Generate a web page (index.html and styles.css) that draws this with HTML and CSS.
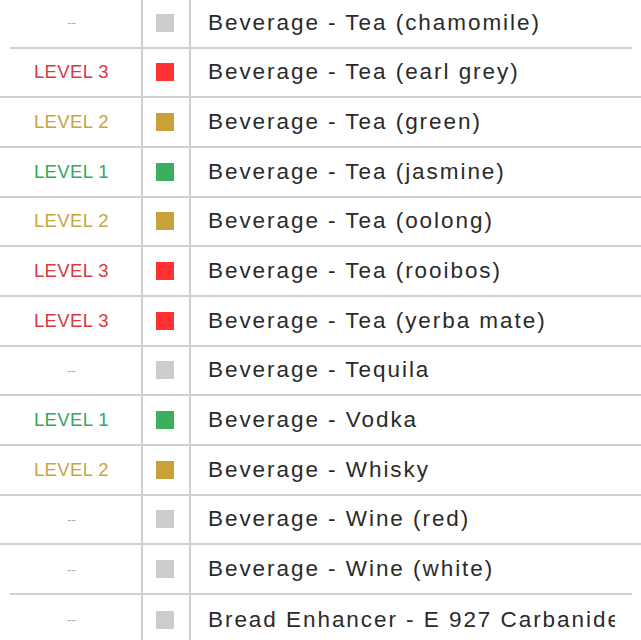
FILE: index.html
```html
<!DOCTYPE html>
<html>
<head>
<meta charset="utf-8">
<link rel="stylesheet" href="styles.css">
</head>
<body>
<div class="table">
  <div class="row inset"><div class="lvl none">--</div><div class="sw"><span class="box grey"></span></div><div class="name">Beverage - Tea (chamomile)</div></div>
  <div class="row"><div class="lvl l3">LEVEL 3</div><div class="sw"><span class="box red"></span></div><div class="name">Beverage - Tea (earl grey)</div></div>
  <div class="row"><div class="lvl l2">LEVEL 2</div><div class="sw"><span class="box gold"></span></div><div class="name">Beverage - Tea (green)</div></div>
  <div class="row"><div class="lvl l1">LEVEL 1</div><div class="sw"><span class="box green"></span></div><div class="name">Beverage - Tea (jasmine)</div></div>
  <div class="row"><div class="lvl l2">LEVEL 2</div><div class="sw"><span class="box gold"></span></div><div class="name">Beverage - Tea (oolong)</div></div>
  <div class="row"><div class="lvl l3">LEVEL 3</div><div class="sw"><span class="box red"></span></div><div class="name">Beverage - Tea (rooibos)</div></div>
  <div class="row"><div class="lvl l3">LEVEL 3</div><div class="sw"><span class="box red"></span></div><div class="name">Beverage - Tea (yerba mate)</div></div>
  <div class="row"><div class="lvl none">--</div><div class="sw"><span class="box grey"></span></div><div class="name">Beverage - Tequila</div></div>
  <div class="row"><div class="lvl l1">LEVEL 1</div><div class="sw"><span class="box green"></span></div><div class="name">Beverage - Vodka</div></div>
  <div class="row"><div class="lvl l2">LEVEL 2</div><div class="sw"><span class="box gold"></span></div><div class="name">Beverage - Whisky</div></div>
  <div class="row"><div class="lvl none">--</div><div class="sw"><span class="box grey"></span></div><div class="name">Beverage - Wine (red)</div></div>
  <div class="row inset"><div class="lvl none">--</div><div class="sw"><span class="box grey"></span></div><div class="name">Beverage - Wine (white)</div></div>
  <div class="row last"><div class="lvl none">--</div><div class="sw"><span class="box grey"></span></div><div class="name">Bread Enhancer - E 927 Carbanide</div></div>
</div>
</body>
</html>
```
FILE: styles.css
```css
html, body {
  margin: 0;
  padding: 0;
  background: #fff;
  overflow: hidden;
}
.table {
  margin-top: -1px;
  font-family: "Liberation Sans", Arial, sans-serif;
}
.row {
  display: grid;
  grid-template-columns: 143px 48px 1fr;
  height: 47.66px;
  border-bottom: 2px solid #d0d0d0;
}
.row.inset {
  border-bottom: 2px solid transparent;
  background: linear-gradient(#d2d2d2, #d2d2d2) no-repeat 10px 100% / 622px 2px;
  background-origin: border-box;
  background-clip: border-box;
}
.row.last {
  border-bottom: none;
  height: 49.66px;
}
.lvl {
  border-right: 2px solid #d0d0d0;
  display: flex;
  align-items: center;
  justify-content: center;
  font-size: 18.5px;
  letter-spacing: 0.4px;
  padding-left: 2px;
}
.lvl.none {
  color: #a8a8a8;
  font-size: 13px;
  letter-spacing: 0px;
}
.l3 { color: #d9393f; }
.l2 { color: #c6a63e; }
.l1 { color: #2fa95a; }
.sw {
  border-right: 2px solid #d0d0d0;
  display: flex;
  align-items: center;
  justify-content: center;
  padding-right: 2px;
}
.box {
  width: 18px;
  height: 18px;
  display: block;
}
.grey { background: #cccccc; }
.red { background: #ff3333; }
.gold { background: #c9a03a; }
.green { background: #38b05c; }
.name {
  display: flex;
  align-items: center;
  padding-left: 17px;
  font-size: 22.5px;
  letter-spacing: 1.95px;
  color: #2a2a2a;
  white-space: nowrap;
  overflow: hidden;
  margin-right: 26px;
}
```
